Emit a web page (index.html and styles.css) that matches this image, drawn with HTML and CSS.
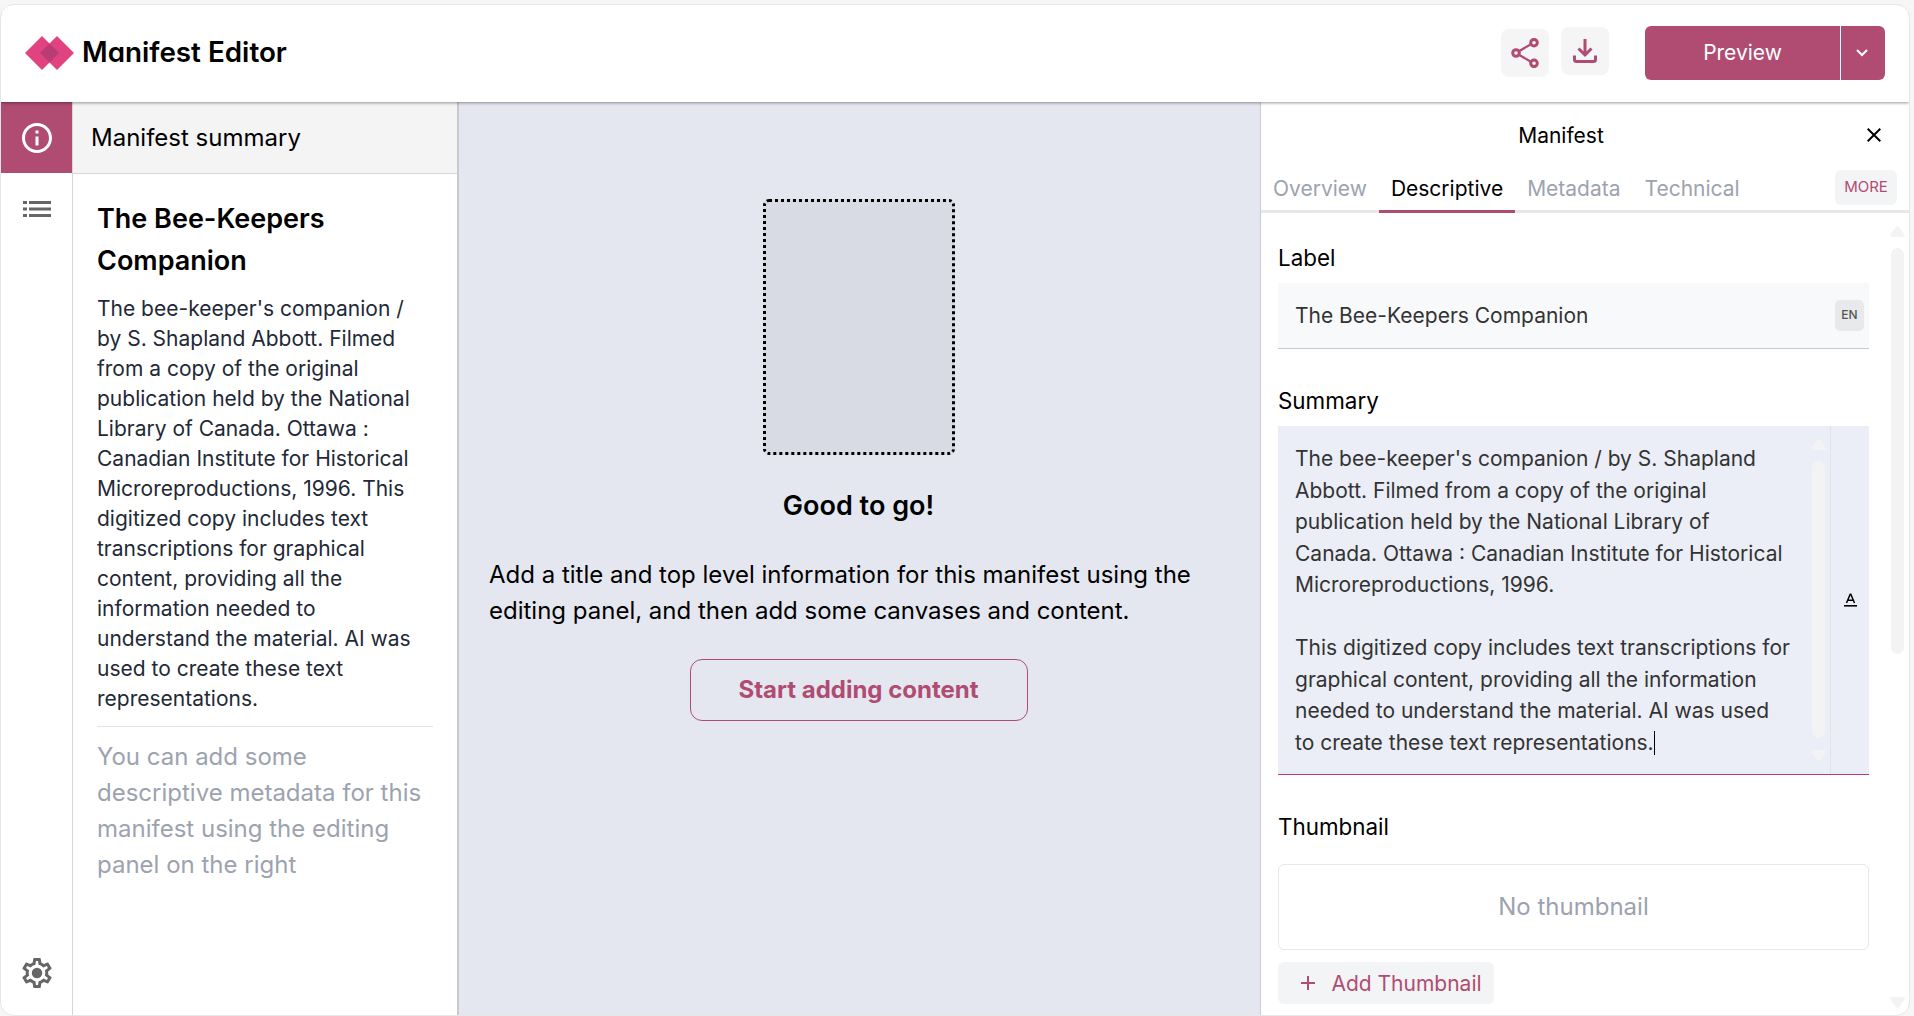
FILE: index.html
```
<!DOCTYPE html>
<html lang="en">
<head>
<meta charset="utf-8">
<title>Manifest Editor</title>
<link rel="stylesheet" href="styles.css">
</head>
<body>
<div class="app">
  <header class="topbar">
    <div class="brand">
      <svg class="brand-mark" viewBox="0 0 49 34"><path d="M17 0 34 17 17 34 0 17Z" fill="#e04380"/><path d="M32 0 49 17 32 34 15 17Z" fill="#e04380"/><path d="M24.500 7.500 34 17 24.500 26.500 15 17Z" fill="#b93c74"/></svg>
      <span class="brand-name">Manifest Editor</span>
    </div>
    <div class="actions">
      <button class="icon-button" aria-label="Share"><svg width="28" height="30" viewBox="0 0 28 30" fill="none" stroke="#b04c72" stroke-width="3"><path d="M7.500 13.500 19.500 6.500M7.500 16.500 19.500 23.500" stroke-width="2.200"/><circle cx="5" cy="15" r="3.300"/><circle cx="23" cy="4.700" r="3.300"/><circle cx="23" cy="25.300" r="3.300"/></svg></button>
      <button class="icon-button raised" aria-label="Download"><svg width="24" height="24" viewBox="0 0 24 24" fill="none" stroke="#b04c72" stroke-width="3"><path d="M12 0V16M5.500 9.500 12 16 18.500 9.500M1.500 16.500V20.500Q1.500 22.500 3.500 22.500H20.500Q22.500 22.500 22.500 20.500V16.500"/></svg></button>
      <div class="split">
        <button class="split-main">Preview</button>
        <button class="split-toggle" aria-label="More preview options"><svg width="12" height="8" viewBox="0 0 12 8" fill="none" stroke="#fff" stroke-width="2"><path d="M1 1 6 6 11 1"/></svg></button>
      </div>
    </div>
  </header>
  <div class="workspace">
    <nav class="rail">
      <button class="rail-button active" aria-label="Summary"><svg width="30" height="30" viewBox="2 2 20 20" fill="#fff"><path d="M11 7h2v2h-2zm0 4h2v6h-2zm1-9C6.480 2 2 6.480 2 12s4.480 10 10 10 10-4.480 10-10S17.520 2 12 2zm0 18c-4.410 0-8-3.590-8-8s3.590-8 8-8 8 3.590 8 8-3.590 8-8 8z"/></svg></button>
      <button class="rail-button" aria-label="Canvases"><svg width="28" height="16" viewBox="0 0 28 16" fill="#666"><path d="M0 0h4v3H0zM6 0h22v3H6zM0 6.500h4v3H0zM6 6.500h22v3H6zM0 13h4v3H0zM6 13h22v3H6z"/></svg></button>
      <button class="rail-button settings" aria-label="Settings"><svg width="30" height="30" viewBox="2 2 20 20" fill="#666"><path d="M19.430 12.980c.04-.32.07-.64.07-.98s-.03-.66-.07-.98l2.110-1.650c.19-.15.24-.42.12-.64l-2-3.460c-.12-.22-.39-.3-.61-.22l-2.490 1c-.52-.4-1.080-.73-1.690-.98l-.38-2.650C14.460 2.180 14.250 2 14 2h-4c-.25 0-.46.18-.49.42l-.38 2.650c-.61.25-1.170.59-1.690.98l-2.490-1c-.23-.09-.49 0-.61.22l-2 3.460c-.13.22-.07.49.12.64l2.110 1.650c-.04.32-.07.65-.07.98s.03.66.07.98l-2.110 1.650c-.19.15-.24.42-.12.64l2 3.460c.12.22.39.3.61.22l2.490-1c.52.4 1.080.73 1.690.98l.38 2.650c.03.24.24.42.49.42h4c.25 0 .46-.18.49-.42l.38-2.650c.61-.25 1.170-.59 1.690-.98l2.490 1c.23.09.49 0 .61-.22l2-3.460c.12-.22.07-.49-.12-.64l-2.110-1.650zm-1.980-1.710c.04.31.05.52.05.73 0 .21-.02.43-.05.73l-.14 1.130.89.7 1.080.84-.7 1.210-1.270-.51-1.040-.42-.9.68c-.43.32-.84.56-1.250.73l-1.060.43-.16 1.130-.2 1.350h-1.400l-.19-1.350-.16-1.130-1.060-.43c-.43-.18-.83-.41-1.230-.71l-.91-.7-1.060.43-1.270.51-.7-1.210 1.080-.84.89-.7-.14-1.130c-.03-.31-.05-.54-.05-.74s.02-.43.05-.73l.14-1.130-.89-.7-1.080-.84.7-1.210 1.270.51 1.040.42.9-.68c.43-.32.84-.56 1.250-.73l1.060-.43.16-1.130.2-1.350h1.390l.19 1.350.16 1.130 1.060.43c.43.18.83.41 1.230.71l.91.7 1.060-.43 1.270-.51.7 1.210-1.070.85-.89.7.14 1.130z"/><circle cx="12" cy="12" r="3.500"/></svg></button>
    </nav>
    <aside class="summary">
      <h2 class="summary-title">Manifest summary</h2>
      <div class="summary-body">
        <h3 class="manifest-title">The Bee-Keepers<br>Companion</h3>
        <p class="manifest-text">The bee-keeper's companion /<br>by S. Shapland Abbott. Filmed<br>from a copy of the original<br>publication held by the National<br>Library of Canada. Ottawa :<br>Canadian Institute for Historical<br>Microreproductions, 1996. This<br>digitized copy includes text<br>transcriptions for graphical<br>content, providing all the<br>information needed to<br>understand the material. AI was<br>used to create these text<br>representations.</p>
        <p class="hint">You can add some<br>descriptive metadata for this<br>manifest using the editing<br>panel on the right</p>
      </div>
    </aside>
    <main class="canvas">
      <div class="placeholder"></div>
      <h2 class="canvas-title">Good to go!</h2>
      <p class="canvas-text">Add a title and top level information for this manifest using the<br>editing panel, and then add some canvases and content.</p>
      <button class="start">Start adding content</button>
    </main>
    <section class="editor">
      <div class="editor-head"><span class="editor-title">Manifest</span><svg class="close" width="14" height="14" viewBox="0 0 14 14" stroke="#000" stroke-width="2"><path d="M.7.7 13.300 13.300M13.300.7.7 13.300"/></svg></div>
      <div class="tabs">
        <span class="tab">Overview</span><span class="tab current">Descriptive</span><span class="tab">Metadata</span><span class="tab">Technical</span>
        <button class="more">MORE</button>
      </div>
      <div class="editor-scroll">
        <div class="form">
          <label class="form-label">Label</label>
          <div class="field"><span>The Bee-Keepers Companion</span><span class="lang">EN</span></div>
          <label class="form-label second">Summary</label>
          <div class="area">
            <div class="area-text">The bee-keeper's companion / by S. Shapland<br>Abbott. Filmed from a copy of the original<br>publication held by the National Library of<br>Canada. Ottawa : Canadian Institute for Historical<br>Microreproductions, 1996.<br><br>This digitized copy includes text transcriptions for<br>graphical content, providing all the information<br>needed to understand the material. AI was used<br>to create these text representations.<i class="caret"></i></div>
            <div class="scrollbar inner"><svg width="15" height="11" viewBox="0 0 15 11"><path d="M6 1Q7.500-.8 9 1L14.500 8.500Q15.500 11 13 11H2Q-.5 11 .5 8.500Z"/></svg><div class="thumb"></div><svg class="down" width="15" height="11" viewBox="0 0 15 11"><path d="M6 1Q7.500-.8 9 1L14.500 8.500Q15.500 11 13 11H2Q-.5 11 .5 8.500Z"/></svg></div>
            <div class="format"><svg width="13" height="14" viewBox="0 0 13 14"><path d="M0 12h13v1.600H0z"/><path d="M2.500 10 6.200 1.200H6.800L10.500 10M4 7.300H9" fill="none" stroke="#000" stroke-width="1.500"/></svg></div>
          </div>
          <label class="form-label third">Thumbnail</label>
          <div class="empty">No thumbnail</div>
          <button class="add"><svg width="14" height="14" viewBox="0 0 14 14" stroke="#b04c72" stroke-width="2"><path d="M7 0V14M0 7H14"/></svg><span>Add Thumbnail</span></button>
        </div>
        <div class="scrollbar outer"><svg width="15" height="11" viewBox="0 0 15 11"><path d="M6 1Q7.500-.8 9 1L14.500 8.500Q15.500 11 13 11H2Q-.5 11 .5 8.500Z"/></svg><div class="thumb"></div><svg class="down" width="15" height="11" viewBox="0 0 15 11"><path d="M6 1Q7.500-.8 9 1L14.500 8.500Q15.500 11 13 11H2Q-.5 11 .5 8.500Z"/></svg></div>
      </div>
    </section>
  </div>
</div>
</body>
</html>
```
FILE: styles.css
```
* { box-sizing: border-box; }
body { margin: 0; height: 1016px; overflow: hidden; background: #f6f6f6; font-family: Inter, sans-serif; color: #000; font-size: 21px; padding-top: 4px; }
button { font: inherit; border: 0; padding: 0; margin: 0; background: none; color: inherit; display: flex; align-items: center; justify-content: center; }
h2, h3, p { margin: 0; font-weight: 400; }
svg { display: block; flex: none; }

.app { width: 1910px; height: 1012px; border: 1px solid #e6e6e6; border-radius: 14px; background: #fff; overflow: hidden; display: flex; flex-direction: column; }
.topbar { height: 97px; flex: none; display: flex; justify-content: space-between; align-items: center; padding: 0 24px 1px 24px; position: relative; z-index: 2; box-shadow: 0 1px 3px rgba(0,0,0,.4); background: #fff; }
.brand { display: flex; align-items: center; gap: 8px; }
.brand-mark { width: 49px; height: 34px; }
.brand-name { font-size: 27.800px; font-weight: 600; font-feature-settings: "cv11"; padding-bottom: 2px; }
.actions { display: flex; align-items: center; }
.icon-button { width: 48px; height: 48px; border-radius: 8px; background: #f5f5f5; margin-right: 12px; }
.raised { margin: 0 36px 4px 0; }
.split { display: flex; gap: 1px; height: 54px; border-radius: 6px; overflow: hidden; color: #fff; }
.split-main { width: 195px; background: #b04c72; padding-bottom: 2px; }
.split-toggle { width: 44px; background: #b04c72; padding-right: 2px; }

.workspace { flex: 1; display: flex; min-height: 0; }
.rail { width: 72px; flex: none; border-right: 1px solid #d6d6d6; display: flex; flex-direction: column; }
.rail-button { width: 71px; height: 71px; }
.active { background: #b04c72; }
.settings { margin: auto 0 7px; }
.summary { width: 386px; flex: none; border-right: 2px solid #c9c9c9; }
.summary-title { height: 72px; background: #f4f4f4; border-bottom: 1px solid #d6d6d6; padding-left: 18px; font-size: 24px; line-height: 71px; }
.summary-body { padding: 24px 24px 0; }
.manifest-title { font-size: 27px; line-height: 42px; font-weight: 600; }
.manifest-text { margin-top: 12px; padding-bottom: 12px; line-height: 30px; border-bottom: 1px solid #e2e4e8; color: #1f2937; }
.hint { margin-top: 12px; font-size: 24px; line-height: 36px; color: #9ca3af; }

.canvas { width: 801px; flex: none; padding-right: 2px; background: #e4e7f0; display: flex; flex-direction: column; align-items: center; }
.placeholder { margin-top: 97px; width: 192px; height: 256px; border: 3px dotted #000; border-radius: 6px; background: #d8dbe4; }
.canvas-title { margin-top: 30px; font-size: 27px; line-height: 42px; font-weight: 600; }
.canvas-text { align-self: stretch; margin: 30px 0 0 30px; font-size: 24px; line-height: 36px; white-space: nowrap; }
.start { margin-top: 30px; width: 338px; height: 62px; padding-bottom: 2px; border: 1px solid #b04c72; border-radius: 12px; color: #b04c72; font-size: 24px; font-weight: 700; }

.editor { flex: 1; border-left: 1px solid #c9ccd4; display: flex; flex-direction: column; min-width: 0; }
.editor-head { height: 67px; flex: none; display: grid; grid-template-columns: 1fr auto 1fr; align-items: center; padding: 0 28px 1px 0; }
.editor-title { grid-column: 2; padding-right: 20px; }
.close { justify-self: end; }
.tabs { height: 44px; flex: none; display: flex; border-bottom: 3px solid #e5e7eb; color: #9ca3af; }
.tab { height: 44px; padding: 0 12px; line-height: 40px; }
.current { color: #000; border-bottom: 3px solid #b04c72; }
.more { margin: 1px 12px 0 auto; width: 62px; height: 35px; padding-bottom: 2px; border-radius: 6px; background: #f3f4f6; color: #b04c72; font-size: 15px; }
.editor-scroll { flex: 1; min-height: 0; display: flex; justify-content: space-between; }
.form { width: 591px; margin-left: 17px; }
.form-label { display: block; margin-top: 30px; line-height: 30px; font-size: 22.400px; }
.field { margin-top: 10px; height: 66px; border-bottom: 1px solid #c5cad1; background: #f8f9fb; display: flex; justify-content: space-between; align-items: center; padding: 0 5px 0 17px; color: #333; }
.lang { width: 29px; height: 31px; border-radius: 5px; background: #e8e9ea; color: #555; font-size: 12px; font-weight: 500; line-height: 29px; text-align: center; }
.second { margin-top: 37px; }
.area { margin-top: 10px; height: 349px; background: #ebeef6; border-bottom: 1px solid #b83b71; display: flex; color: #333; }
.area-text { padding: 17px 0 0 17px; width: 533px; line-height: 31.500px; white-space: nowrap; }
.caret { display: inline-block; width: 1px; height: 24px; background: #000; vertical-align: -5px; }
.scrollbar { width: 15px; flex: none; display: flex; flex-direction: column; align-items: center; fill: #f3f3f3; }
.down { transform: rotate(180deg); }
.thumb { width: 13px; border-radius: 7px; background: #f3f3f3; margin: 11px 0 12px; }
.inner { padding-top: 13px; margin-right: 4px; }
.inner .thumb { height: 277px; }
.outer { padding-top: 13px; margin-right: 4px; }
.outer .thumb { height: 406px; margin-bottom: 343px; }
.format { flex: 1; border-left: 1px solid #e1e4e8; display: flex; align-items: center; justify-content: center; }
.third { margin-top: 37px; }
.empty { margin-top: 22px; height: 86px; padding-bottom: 2px; border: 1px solid #e5e7eb; border-radius: 6px; display: flex; align-items: center; justify-content: center; color: #9ca3af; font-size: 24px; }
.add { margin-top: 12px; width: 216px; height: 42px; padding-left: 11px; border-radius: 6px; background: #f3f4f6; color: #b04c72; gap: 16px; }
```
